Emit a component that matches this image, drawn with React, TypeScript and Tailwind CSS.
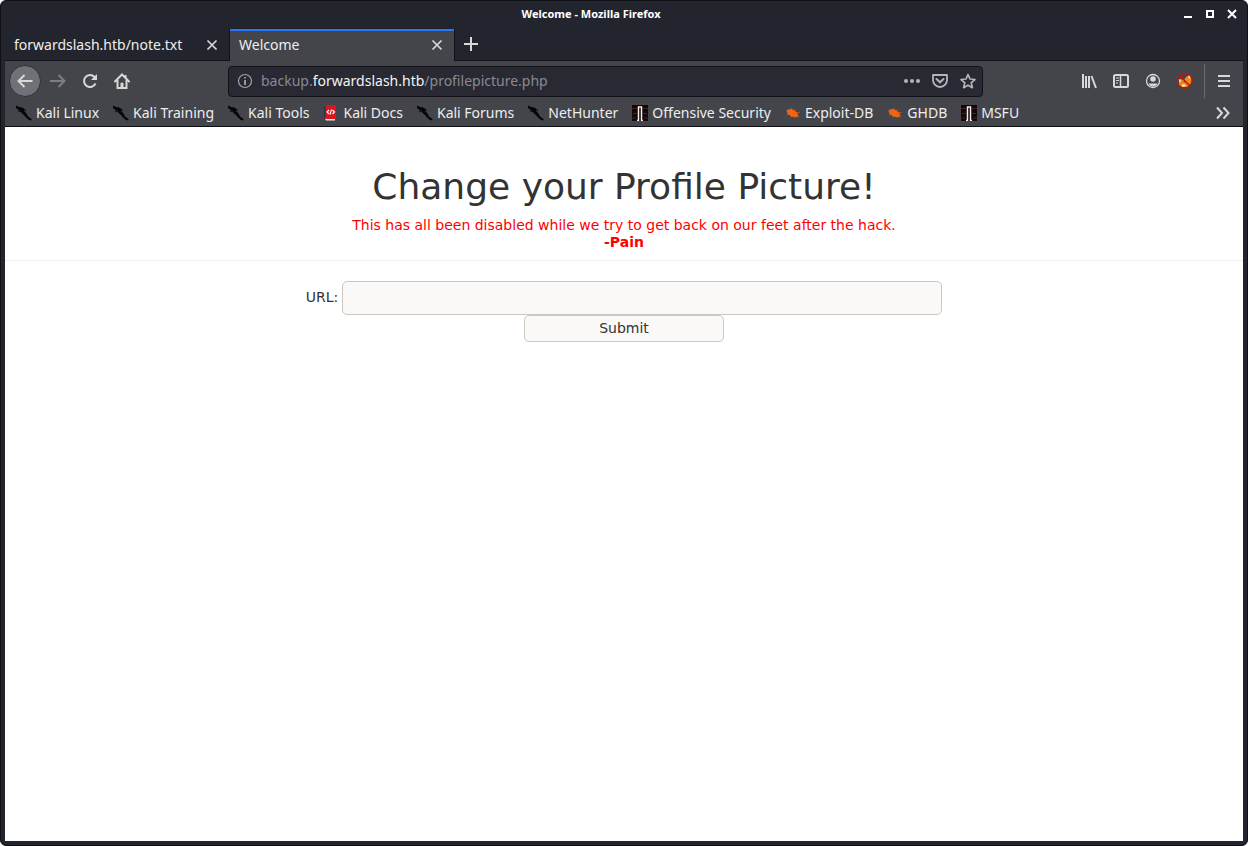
import type { ReactNode } from "react";

function Dragon() {
  return (
    <svg width="16" height="16" viewBox="0 0 16 16" aria-hidden="true" className="shrink-0">
      <path d="M0 .5 3 2 6 2.500 8 4 8.500 6.500 10.500 8.500 12 11.500 15.500 14V15.500L13 15 10 12.500 8 10 6 8.500 4.500 6.500 2 4.500 0 3Z" fill="#050505" />
      <path d="M6 3 10 5.500M4 6 2 6.500" stroke="#050505" strokeWidth="1" />
    </svg>
  );
}

function Book() {
  return (
    <svg width="16" height="16" viewBox="0 0 16 16" aria-hidden="true" className="shrink-0">
      <path d="M1 1.500 3 .5V14L1 13Z" fill="#27344e" />
      <path d="M2 13.500H12V15.500H3Z" fill="#e8e8e8" />
      <path d="M2.500 0H13V14H2.500Z" fill="#dd1420" />
      <path d="m6 5-2 2 2 2M9.500 5l2 2-2 2M8.500 4.500 7 9.500" stroke="#fff" strokeWidth="1.100" fill="none" />
    </svg>
  );
}

function Tower() {
  return (
    <svg width="16" height="16" viewBox="0 0 16 16" aria-hidden="true" className="shrink-0">
      <path d="M0 0H16V16H0Z" fill="#160607" />
      <path d="M0 3.500H5M11 3.500H16M1 8.500H5M11 8.500H15M0 13H4M12 13H16" stroke="#4a2223" strokeWidth="1" />
      <path d="M5 15.500H6.500V2H9.500V15.500H11" fill="#0a0303" stroke="#f1eded" strokeWidth="1.500" />
    </svg>
  );
}

function Bug() {
  return (
    <svg width="16" height="16" viewBox="0 0 16 16" aria-hidden="true" className="shrink-0">
      <path d="M1.500 6 4 4 8 4.500 12 7.500 13.500 11 10 12.500 5.500 11 2.500 8.500Z" fill="#f26411" />
      <path d="m6 5 .5-2M9 6l1.500-1.500M12 8l2.500-.5M4 9.500l-2 .5M7 11l-1.500 1.500M12 11l2 1.500M3 6 1.500 5" stroke="#f26411" strokeWidth=".7" />
    </svg>
  );
}

const bookmarks: { name: string; icon: ReactNode }[] = [
  { name: "Kali Linux", icon: <Dragon /> },
  { name: "Kali Training", icon: <Dragon /> },
  { name: "Kali Tools", icon: <Dragon /> },
  { name: "Kali Docs", icon: <Book /> },
  { name: "Kali Forums", icon: <Dragon /> },
  { name: "NetHunter", icon: <Dragon /> },
  { name: "Offensive Security", icon: <Tower /> },
  { name: "Exploit-DB", icon: <Bug /> },
  { name: "GHDB", icon: <Bug /> },
  { name: "MSFU", icon: <Tower /> },
];

function IconButton({ label, className = "", children }: { label: string; className?: string; children: ReactNode }) {
  return (
    <button type="button" aria-label={label} className={`flex shrink-0 items-center justify-center ${className}`}>
      <svg width="16" height="16" viewBox="0 0 16 16" fill="none" stroke="currentColor" strokeWidth="2" aria-hidden="true">
        {children}
      </svg>
    </button>
  );
}

function TitleBar() {
  return (
    <div className="flex h-7 items-center">
      <h1 className="flex-1 pb-[2px] text-center text-[11px] leading-4 font-bold text-white">Welcome - Mozilla Firefox</h1>
      <div className="flex text-white">
        <IconButton label="Minimize" className="w-[22px]">
          <path d="M4 10H12" />
        </IconButton>
        <IconButton label="Maximize" className="w-[22px]">
          <path d="M5 4H11V10H5Z" />
        </IconButton>
        <IconButton label="Close window" className="w-[22px]">
          <path d="m4 3 8 8M12 3l-8 8" />
        </IconButton>
      </div>
    </div>
  );
}

function TabStrip() {
  return (
    <div className="flex h-8 text-[#eeeeec]">
      <div className="flex w-56 items-center justify-between border-b border-[#111217] pr-[9px] pl-[9px]">
        <span>forwardslash.htb/note.txt</span>
        <IconButton label="Close tab" className="text-[#d8d8d6]">
          <path d="m3.500 3.500 9 9M12.500 3.500l-9 9" strokeWidth="1.700" />
        </IconButton>
      </div>
      <div className="flex w-[226px] items-center justify-between border-x border-[#111217] bg-[#43454b] pr-[9px] pl-[9px] shadow-[inset_0_2px_0_#2a76f6]">
        <span>Welcome</span>
        <IconButton label="Close tab" className="text-[#d8d8d6]">
          <path d="m3.500 3.500 9 9M12.500 3.500l-9 9" strokeWidth="1.700" />
        </IconButton>
      </div>
      <div className="flex flex-1 border-b border-[#111217] pl-2 text-[#d8d8d6]">
        <IconButton label="New tab">
          <path d="M8 0V14M1 7H15" />
        </IconButton>
      </div>
    </div>
  );
}

function NavBar() {
  return (
    <div className="flex h-10 items-center pr-[3px] pl-1 text-[#d8d8d6]">
      <IconButton label="Back" className="mr-px size-8 rounded-full border border-[#303137] bg-[#707176]">
        <path d="M15.500 8H2M7.500 2 1.500 8l6 6" />
      </IconButton>
      <IconButton label="Forward" className="w-8 text-[#7d7e82]">
        <path d="M0 8H14M8.500 2l6 6-6 6" />
      </IconButton>
      <IconButton label="Reload" className="w-8">
        <path d="M13.500 10.500A6 6 0 1 1 12.500 4L14 6" />
        <path d="M15 1V7H9Z" fill="currentColor" stroke="none" />
      </IconButton>
      <IconButton label="Home" className="w-8">
        <path d="m1 8.500 7-7 7 7" strokeLinecap="round" />
        <path d="M3.500 7V15H12.500V7M11.500 2V5" />
        <path d="M6.500 15V10.500Q8 8.500 9.500 10.500V15Z" fill="currentColor" stroke="none" />
      </IconButton>
      <div className="ml-[90px] flex h-[31px] w-[755px] items-center rounded border border-[#111217] bg-[#282933] pl-2">
        <svg width="16" height="16" viewBox="0 0 16 16" fill="none" stroke="#a2a3a8" strokeWidth="1.200" aria-hidden="true">
          <circle cx="8" cy="8" r="6.500" />
          <path d="M8 7V12M8 4V5.500" strokeWidth="1.800" />
        </svg>
        <div className="ml-2 flex-1 text-[#888a91]">
          backup.<span className="text-[#f4f4f2]">forwardslash.htb</span>/profilepicture.php
        </div>
        <div className="flex text-[#b5b5b8]">
          <IconButton label="Page actions" className="w-7">
            <g fill="currentColor" stroke="none">
              <circle cx="2" cy="8" r="2" />
              <circle cx="8" cy="8" r="2" />
              <circle cx="14" cy="8" r="2" />
            </g>
          </IconButton>
          <IconButton label="Save to Pocket" className="w-7">
            <path d="M1 2H15V7A7 7 0 0 1 1 7Z" strokeLinejoin="round" strokeWidth="1.800" />
            <path d="m4.500 6 3.500 3.300L11.500 6" strokeLinecap="round" />
          </IconButton>
          <IconButton label="Bookmark this page" className="w-7">
            <path d="m8 1.500 2 4.500 5 .5-3.800 3.300 1.200 4.900L8 12.200l-4.400 2.500 1.200-4.900L1 6.500 6 6Z" strokeWidth="1.700" strokeLinejoin="round" />
          </IconButton>
        </div>
      </div>
      <div className="ml-auto flex items-center">
        <IconButton label="Library" className="w-8">
          <path d="M2 1V15M5 3V15M8 3V15" />
          <path d="m10.500 3 4.500 12" />
        </IconButton>
        <IconButton label="Sidebars" className="w-8">
          <rect x="1" y="2" width="14" height="12" rx="1.500" />
          <path d="M7.500 2V14" strokeWidth="1.500" />
          <path d="M3 5H6M3 7.500H6M3 10H5" strokeWidth="1" />
        </IconButton>
        <IconButton label="Account" className="w-8">
          <circle cx="8" cy="8" r="6.500" strokeWidth="1.300" />
          <circle cx="8" cy="6" r="2.800" fill="currentColor" stroke="none" />
          <path d="M3.500 10.500H12.500Q11.500 13.500 8 13.500T3.500 10.500Z" fill="currentColor" stroke="none" />
        </IconButton>
        <IconButton label="Proxy disabled" className="w-8">
          <path d="M2 9 3 6 7 7 9 4 13 2 15 6 14 10 10 14 5 14 2 12Z" fill="#e88b16" stroke="none" />
          <path d="M1.500 6 4 7 3 10ZM11 1.500 14 4 12 6ZM4 12 7 11 9 13 6 14Z" fill="#f0e6d7" stroke="none" />
          <path d="M6 8 9 7 8 10Z" fill="#9a5909" stroke="none" />
          <circle cx="8" cy="8" r="7.200" stroke="#cb1010" strokeWidth="1.200" />
          <path d="m3 3 10 10" stroke="#cb1010" strokeWidth="1.200" />
        </IconButton>
        <span className="ml-[3px] h-[34px] w-px bg-[#6a6b70]" />
        <IconButton label="Open menu" className="ml-[3px] w-8">
          <path d="M2 3H14M2 8H14M2 13H14" />
        </IconButton>
      </div>
    </div>
  );
}

function BookmarksBar() {
  return (
    <nav aria-label="Bookmarks" className="flex h-[26px] items-center justify-between border-b border-[#0e0f13] pr-3 pb-[2px] pl-[11px] text-[#eeeeec]">
      <ul className="flex gap-[14px]">
        {bookmarks.map(({ name, icon }) => (
          <li key={name}>
            <a href="#" className="flex items-center gap-1 whitespace-nowrap">
              {icon}
              {name}
            </a>
          </li>
        ))}
      </ul>
      <IconButton label="More bookmarks" className="text-[#d8d8d6]">
        <path d="m2 2.500 5 5.500-5 5.500M8.500 2.500l5 5.500-5 5.500" />
      </IconButton>
    </nav>
  );
}

function ProfilePage() {
  return (
    <main className="flex-1 bg-white pt-10 text-center font-['DejaVu_Sans',sans-serif] text-sm text-[#333333]">
      <header className="border-b border-[#eeeeee] pb-[9px]">
        <h2 className="text-[36px] leading-10">Change your Profile Picture!</h2>
        <p className="mt-[10px] leading-[17px] text-[#ff0000]">
          This has all been disabled while we try to get back on our feet after the hack.
          <br />
          <b>-Pain</b>
        </p>
      </header>
      <form className="mt-5 flex flex-col items-center" onSubmit={(event) => event.preventDefault()}>
        <div className="flex max-w-full items-center gap-1">
          <label htmlFor="url" className="pb-[2px]">URL:</label>
          <input id="url" type="text" name="url" className="h-[34px] w-[600px] min-w-0 rounded-[5px] border border-[#cdc7c2] bg-[#faf9f8] px-2" />
        </div>
        <button type="submit" className="h-[27px] w-[200px] rounded-[5px] border border-[#cdc7c2] bg-[#faf9f8] pb-[2px]">
          Submit
        </button>
      </form>
    </main>
  );
}

export default function App() {
  return (
    <div className="flex min-h-screen flex-col rounded-md border border-[#101116] bg-[#23252e] px-1 pb-1 font-['Noto_Sans',sans-serif] text-[14px] leading-5">
      <TitleBar />
      <TabStrip />
      <div className="bg-[#43454b]">
        <NavBar />
        <BookmarksBar />
      </div>
      <ProfilePage />
    </div>
  );
}
